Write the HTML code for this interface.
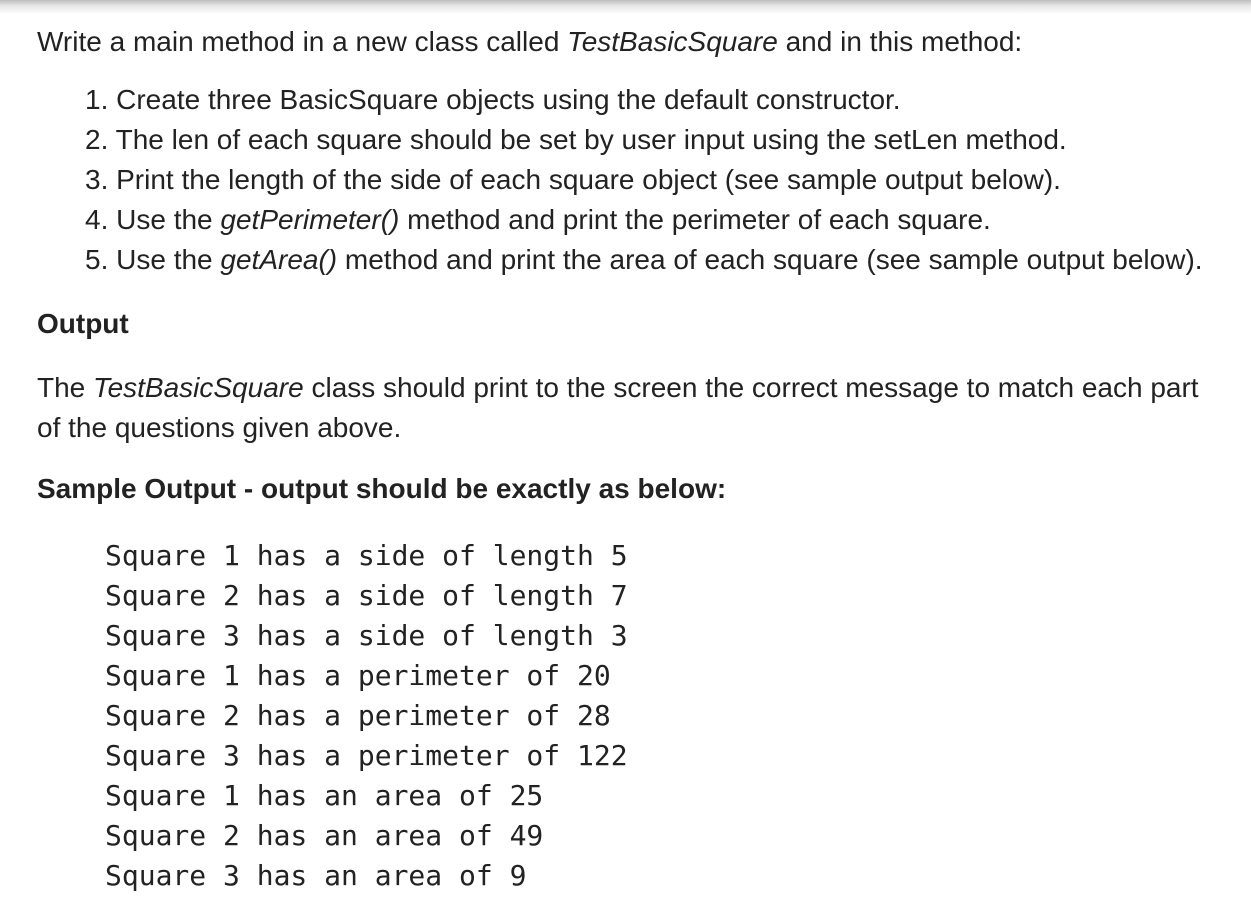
<!DOCTYPE html>
<html><head><meta charset="utf-8"><style>
body{margin:0;width:1251px;height:908px;background:#fff;position:relative;overflow:hidden;font-family:"Liberation Sans",Arial,sans-serif;color:#222;font-size:28px}
.sh{position:absolute;left:0;top:0;width:1251px;height:14px;background:linear-gradient(#bdbdbd,#e6e6e6 40%,#fff)}
.l{position:absolute;line-height:40px;white-space:nowrap}
.m{font-family:"DejaVu Sans Mono","Liberation Mono",monospace;font-size:28px;left:105px;color:#222}
b{font-weight:bold}
</style></head><body>
<div class="sh"></div>
<div class="l" style="left:37px;top:22px">Write a main method in a new class called <i>TestBasicSquare</i> and in this method:</div>
<div class="l" style="left:85px;top:80px">1. Create three BasicSquare objects using the default constructor.</div>
<div class="l" style="left:85px;top:120px">2. The len of each square should be set by user input using the setLen method.</div>
<div class="l" style="left:85px;top:160px">3. Print the length of the side of each square object (see sample output below).</div>
<div class="l" style="left:85px;top:200px">4. Use the <i>getPerimeter()</i> method and print the perimeter of each square.</div>
<div class="l" style="left:85px;top:240px">5. Use the <i>getArea()</i> method and print the area of each square (see sample output below).</div>
<div class="l" style="left:37px;top:304px"><b>Output</b></div>
<div class="l" style="left:37px;top:368px">The <i>TestBasicSquare</i> class should print to the screen the correct message to match each part</div>
<div class="l" style="left:37px;top:408px">of the questions given above.</div>
<div class="l" style="left:37px;top:469px"><b>Sample Output - output should be exactly as below:</b></div>
<div class="l m" style="top:536px">Square 1 has a side of length 5</div>
<div class="l m" style="top:576px">Square 2 has a side of length 7</div>
<div class="l m" style="top:616px">Square 3 has a side of length 3</div>
<div class="l m" style="top:656px">Square 1 has a perimeter of 20</div>
<div class="l m" style="top:696px">Square 2 has a perimeter of 28</div>
<div class="l m" style="top:736px">Square 3 has a perimeter of 122</div>
<div class="l m" style="top:776px">Square 1 has an area of 25</div>
<div class="l m" style="top:816px">Square 2 has an area of 49</div>
<div class="l m" style="top:856px">Square 3 has an area of 9</div>
</body></html>
